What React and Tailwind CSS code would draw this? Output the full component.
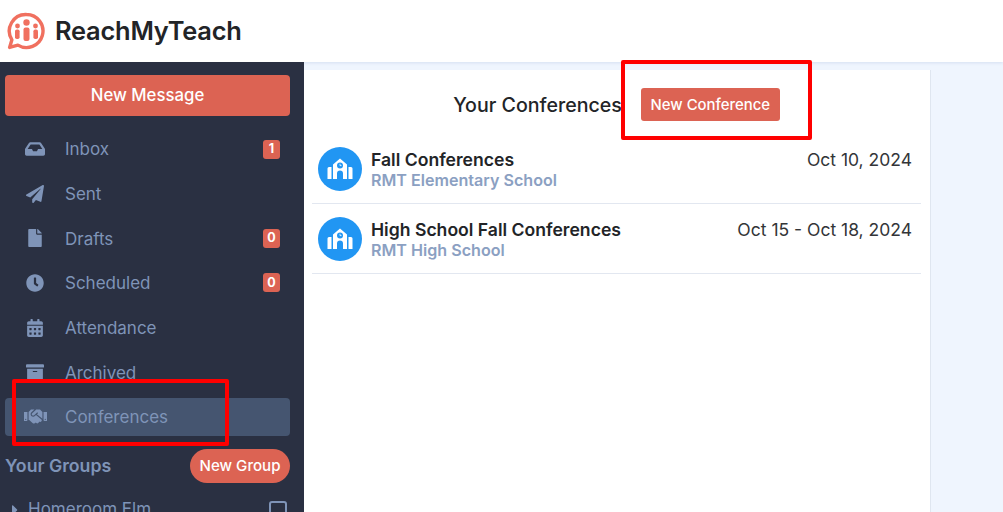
import React from "react";
import { FaInbox, FaPaperPlane, FaFile, FaClock, FaCalendarAlt, FaArchive, FaHandshake, FaCaretRight } from "react-icons/fa";

const nav = [
  { label: "Inbox", Icon: FaInbox, badge: "1", size: 20 },
  { label: "Sent", Icon: FaPaperPlane, size: 18 },
  { label: "Drafts", Icon: FaFile, badge: "0", size: 18 },
  { label: "Scheduled", Icon: FaClock, badge: "0", size: 18 },
  { label: "Attendance", Icon: FaCalendarAlt, size: 18 },
  { label: "Archived", Icon: FaArchive, size: 18 },
  { label: "Conferences", Icon: FaHandshake, active: true, size: 23 },
];

const conferences = [
  { title: "Fall Conferences", school: "RMT Elementary School", date: "Oct 10, 2024" },
  { title: "High School Fall Conferences", school: "RMT High School", date: "Oct 15 - Oct 18, 2024" },
];

function Logo() {
  return (
    <svg width="40" height="40" viewBox="0 0 40 40" className="shrink-0">
      <path d="M20.5 3.5a16.5 16.5 0 1 1-8.6 30.6L3.6 36.4l2.3-7.6A16.5 16.5 0 0 1 20.5 3.5z" fill="none" stroke="#f0705f" strokeWidth="3.4" strokeLinejoin="round" />
      <circle cx="20.5" cy="11.5" r="3.2" fill="#f0705f" />
      <circle cx="11.5" cy="15" r="2.4" fill="#f0705f" />
      <circle cx="29.5" cy="15" r="2.4" fill="#f0705f" />
      <rect x="17.5" y="16.5" width="6" height="13.5" rx="2" fill="#f0705f" />
      <rect x="9" y="18.5" width="4.6" height="9.5" rx="1.8" fill="#f0705f" />
      <rect x="27.4" y="18.5" width="4.6" height="9.5" rx="1.8" fill="#f0705f" />
    </svg>
  );
}

function SchoolIcon() {
  return (
    <svg width="28" height="28" viewBox="0 0 28 28" className="shrink-0">
      <path d="M14 3.5 L21 9.5 V24 H17 V18.5 a3 3 0 0 0-6 0 V24 H7 V9.5 Z" fill="#fff" />
      <circle cx="14" cy="10.5" r="3" fill="#2196f3" />
      <path d="M14 8.8 V10.6 H15.5" fill="none" stroke="#fff" strokeWidth="0.8" />
      <path d="M1.5 13.5 a1.5 1.5 0 0 1 1.5-1.5 H5.5 V24 H1.5 Z" fill="#fff" />
      <path d="M22.5 12 H25 a1.5 1.5 0 0 1 1.5 1.5 V24 H22.5 Z" fill="#fff" />
    </svg>
  );
}

export default function App() {
  return (
    <div className="relative h-[512px] w-[1003px] overflow-hidden bg-[#eff5fe] font-['Inter',sans-serif]">
      <header className="flex h-[62px] items-center gap-[9px] bg-white pl-[6px] shadow-[0_1px_3px_rgba(100,130,180,0.18)]">
        <Logo />
        <span className="pt-[1px] text-[25.4px] font-semibold tracking-[-0.2px] text-[#222427]">ReachMyTeach</span>
      </header>

      <div className="flex h-[450px]">
        <aside className="w-[304px] shrink-0 overflow-hidden bg-[#2a3042] pl-[5px] pr-[14px] pt-[13px]">
          <button className="mb-[14px] h-[41px] w-full rounded-[4px] bg-[#dc6353] pt-[1px] text-[16.75px] font-medium text-white">New Message</button>
          {nav.map(({ label, Icon, badge, active, size }) => (
            <div key={label} className={`mb-[6.67px] flex h-[38px] items-center rounded-[4px] text-[17px] text-[#7f94b8] ${active ? "bg-[#455570]" : ""}`}>
              <span className="flex w-[60px] justify-center">
                <Icon style={{ width: size, height: size }} />
              </span>
              <span className="pt-[2px]">{label}</span>
              {badge && (
                <span className="ml-auto mr-[10px] flex h-[19px] min-w-[17px] items-center justify-center rounded-[3px] bg-[#dc6353] px-[4px] text-[12.5px] font-bold text-white">{badge}</span>
              )}
            </div>
          ))}
          <div className="mt-[13px] flex h-[34px] items-center justify-between">
            <span className="pt-[1px] text-[17.7px] font-semibold text-[#7f94b8]">Your Groups</span>
            <button className="h-[34px] w-[100px] rounded-full bg-[#dc6353] pt-[1px] text-[15.1px] font-medium text-white">New Group</button>
          </div>
          <div className="mt-[17px] flex h-[20px] items-center text-[17px] text-[#7f94b8]">
            <FaCaretRight className="ml-[2px] mr-[5px] h-[16px] w-[16px]" />
            <span>Homeroom Elm</span>
            <span className="ml-auto mr-[3px] h-[18px] w-[18px] rounded-[3px] border-2 border-[#7f94b8]" />
          </div>
        </aside>

        <main className="mt-[8px] h-[442px] w-[627px] border-r border-[#dfe6f0] bg-white pl-[8px] pr-[9px]">
          <div className="flex h-[51px] items-end justify-center gap-[19px]">
            <h1 className="pb-[3px] text-[19.6px] font-medium leading-[26px] text-[#222427]">Your Conferences</h1>
            <button className="h-[33px] w-[139px] rounded-[3px] bg-[#dc6353] pt-[1px] text-[14.9px] font-medium text-white">New Conference</button>
          </div>
          <div className="pt-[13px]">
            {conferences.map((c) => (
              <div key={c.title} className="flex h-[70px] items-start border-b border-[#e2e7f0] pl-[6px] pr-[9px] pt-[13px]">
                <span className="mr-[9px] flex h-[44px] w-[44px] shrink-0 items-center justify-center rounded-full bg-[#2196f3] text-white">
                  <SchoolIcon />
                </span>
                <div className="flex flex-col pt-[3px]">
                  <span className="text-[17.6px] font-semibold leading-[20px] text-[#222427]">{c.title}</span>
                  <span className="text-[16.1px] font-semibold leading-[20px] text-[#8ba0c2]">{c.school}</span>
                </div>
                <span className="ml-auto pt-[3px] text-[17.5px] leading-[20px] text-[#333538]">{c.date}</span>
              </div>
            ))}
          </div>
        </main>
      </div>

      <div className="absolute left-[621px] top-[60px] h-[80px] w-[191px] rounded-[2px] border-[4px] border-[#ff0000]" />
      <div className="absolute left-[12px] top-[379px] h-[67px] w-[217px] rounded-[2px] border-[4px] border-[#ff0000]" />
    </div>
  );
}
